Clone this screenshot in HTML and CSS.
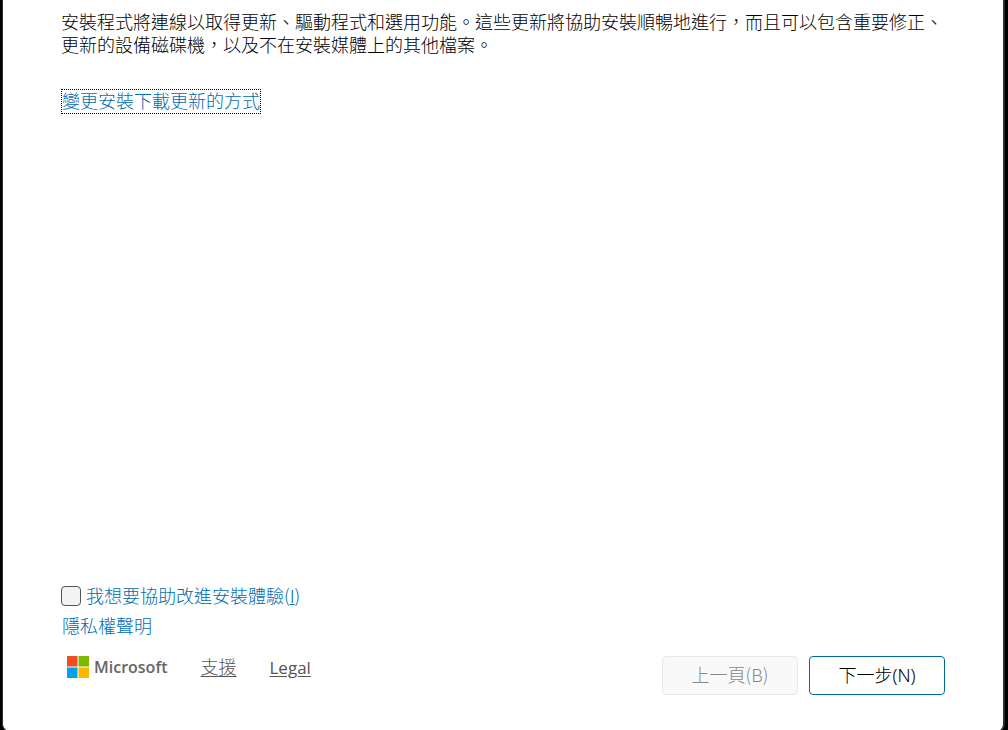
FILE: index.html
```
<!DOCTYPE html>
<html lang="zh-Hant">
<head>
<meta charset="utf-8">
<meta name="viewport" content="width=device-width, initial-scale=1">
<title>Windows 安裝程式</title>
<link rel="stylesheet" href="styles.css">
</head>
<body>
<div class="window">
  <main class="content">
    <p class="description">安裝程式將連線以取得更新、驅動程式和選用功能。這些更新將協助安裝順暢地進行，而且可以包含重要修正、更新的設備磁碟機，以及不在安裝媒體上的其他檔案。</p>
    <a class="link link-focused" href="#updates">變更安裝下載更新的方式</a>
  </main>
  <section class="options">
    <div class="option">
      <input class="checkbox" type="checkbox" id="improve">
      <label class="link" for="improve">我想要協助改進安裝體驗(<u>I</u>)</label>
    </div>
    <a class="link privacy" href="#privacy">隱私權聲明</a>
  </section>
  <footer class="footer">
    <div class="brand-bar">
      <div class="brand">
        <svg class="logo" viewBox="0 0 22 22" aria-hidden="true">
          <path fill="#f04e23" d="M0 0h10.5v10.5H0z"/>
          <path fill="#7db900" d="M11.5 0H22v10.5H11.5z"/>
          <path fill="#00a1ed" d="M0 11.5h10.5V22H0z"/>
          <path fill="#fcb800" d="M11.5 11.5H22V22H11.5z"/>
        </svg>
        <span class="brand-name">Microsoft</span>
      </div>
      <a class="footer-link support" href="#support">支援</a>
      <a class="footer-link" href="#legal">Legal</a>
    </div>
    <div class="actions">
      <button class="button" type="button" disabled>上一頁(B)</button>
      <button class="button button-next" type="button">下一步(N)</button>
    </div>
  </footer>
</div>
</body>
</html>
```
FILE: styles.css
```
* {
  box-sizing: border-box;
}

html {
  height: 100%;
  overflow: hidden;
  background: #000;
}

body {
  height: 100%;
  margin: 0;
  padding: 0 3px 0 2px;
  color: #000;
  font: 300 18px/23px "Noto Sans CJK TC", sans-serif;
}

.window {
  display: flex;
  flex-direction: column;
  min-height: calc(100% + 2px);
  padding: 10px 58px 36px;
  border: solid #2b2d2f;
  border-width: 0 2px 1px 1px;
  border-radius: 0 0 8px 8px;
  background: #fff;
}

.content {
  flex: 1;
}

.description {
  margin: 0 0 33px;
}

.link {
  color: #006cb0;
  text-decoration: none;
}

.link-focused {
  display: inline-block;
  padding: 0 1px 2px;
  outline: 1px dotted #000;
  outline-offset: -1px;
}

.option {
  display: flex;
  align-items: center;
  gap: 5px;
}

.checkbox {
  appearance: none;
  width: 20px;
  height: 20px;
  margin: 0;
  border: 1px solid #555;
  border-radius: 4px;
  background: #f3f3f3;
}

.privacy {
  display: block;
  width: fit-content;
  margin-top: 7px;
  padding-left: 1px;
}

.footer {
  display: flex;
  justify-content: space-between;
  margin-top: 19px;
}

.brand-bar {
  display: flex;
  align-items: center;
  height: 22px;
  padding-left: 6px;
  color: #666;
  font-family: "Open Sans", "Noto Sans CJK TC", sans-serif;
  font-weight: 400;
}

.brand {
  display: flex;
  align-items: center;
  gap: 5px;
}

.logo {
  width: 22px;
  height: 22px;
}

.brand-name {
  font-size: 16px;
  font-weight: 600;
}

.footer-link {
  margin-left: 33px;
  color: #555;
  font-size: 17px;
  text-decoration: underline;
  text-underline-offset: 2px;
}

.support {
  font-size: 18px;
  font-weight: 300;
}

.actions {
  display: flex;
  gap: 11px;
}

.button {
  width: 136px;
  height: 39px;
  padding: 0 0 2px;
  border: 1px solid #e8e8e8;
  border-radius: 4px;
  background: #f9f9f9;
  color: #888;
  font: inherit;
}

.button-next {
  padding: 0;
  border-color: #0067a0;
  background: #fff;
  color: #000;
  font-family: "Noto Sans", "Noto Sans CJK TC", sans-serif;
}
```
